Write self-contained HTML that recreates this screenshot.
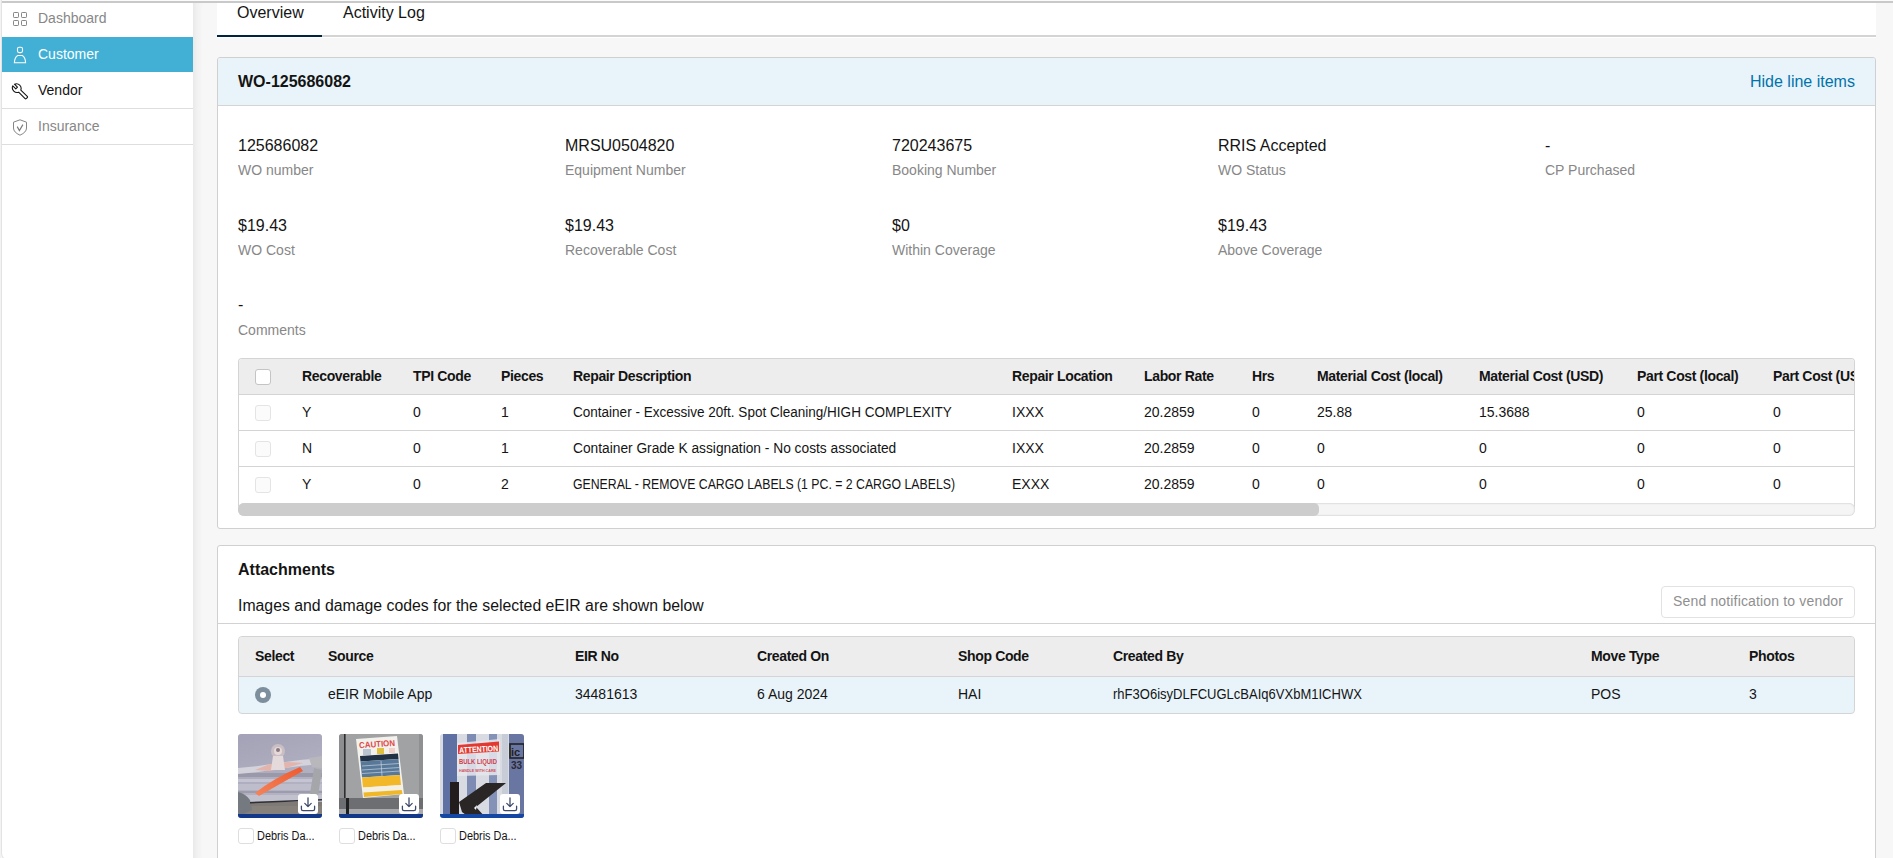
<!DOCTYPE html>
<html><head><meta charset="utf-8">
<style>
*{box-sizing:border-box;margin:0;padding:0}
html,body{width:1893px;height:858px;overflow:hidden}
body{background:#f7f7f7;font-family:"Liberation Sans",sans-serif;color:#141414;position:relative;font-size:14px}
.a{position:absolute;white-space:nowrap;line-height:1}
.t12{font-size:12px}
.t14{font-size:14px}
.t16{font-size:16px}
.b{font-weight:700}
.hb{letter-spacing:-0.25px}
.g{color:#878787}
.box{position:absolute}
.cb{position:absolute;width:16px;height:16px;border:1px solid #c4c4c4;border-radius:3px;background:#fff}
.cbd{border-color:#e4e4e4;background:#fbfbfb}
</style></head><body>
<div class="box" style="left:0;top:0;width:1px;height:858px;background:#f3f3f3"></div>
<div class="box" style="left:1px;top:0;width:192px;height:861px;background:#fff;border-left:1px solid #e3e3e3;border-bottom:1px solid #e3e3e3;border-radius:0 0 0 8px"></div>
<div class="box" style="left:193px;top:0;width:10px;height:858px;background:linear-gradient(to right,#e9e9e9,#f1f1f1 40%,#f7f7f7)"></div>
<div class="box" style="left:2px;top:1px;width:1891px;height:2px;background:#c9c9c9"></div>
<div class="box" style="left:2px;top:0;width:1891px;height:1px;background:#fbfbfb"></div>
<svg class="a" style="left:13px;top:12px" width="14" height="14" viewBox="0 0 14 14" fill="none" stroke="#878787" stroke-width="1">
<rect x="0.5" y="0.5" width="5" height="5" rx="0.7"/><rect x="8.5" y="0.5" width="5" height="5" rx="0.7"/>
<rect x="0.5" y="8.5" width="5" height="5" rx="0.7"/><rect x="8.5" y="8.5" width="5" height="5" rx="0.7"/></svg>
<span class="a t14" style="left:38px;top:11px;color:#878787">Dashboard</span>
<div class="box" style="left:2px;top:37px;width:191px;height:35px;background:#42b0d5"></div>
<svg class="a" style="left:13px;top:46px" width="14" height="18" viewBox="0 0 14 18" fill="none" stroke="#fff" stroke-width="1.1">
<rect x="4.5" y="1.2" width="5" height="5.4" rx="1.6"/><path d="M4.7 9.5 L9.3 9.5 Q12.4 11.3 12.6 16.8 L1.4 16.8 Q1.6 11.3 4.7 9.5 Z"/></svg>
<span class="a t14" style="left:38px;top:47px;color:#fff">Customer</span>
<svg class="a" style="left:11px;top:81.5px" width="18" height="18" viewBox="0 0 24 24" fill="none" stroke="#141414" stroke-width="1.45" stroke-linejoin="round">
<path d="M21.7 19.3 L13.1 10.7 C13.9 8.5 13.4 6 11.6 4.2 C9.7 2.3 6.9 1.9 4.6 2.9 L8.6 6.9 L6.4 9.1 L2.4 5.1 C1.3 7.4 1.8 10.2 3.7 12.1 C5.5 13.9 8 14.4 10.2 13.6 L18.8 22.2 C19.2 22.6 19.8 22.6 20.2 22.2 L21.7 20.7 C22.1 20.3 22.1 19.7 21.7 19.3 Z"/></svg>
<span class="a t14" style="left:38px;top:83px">Vendor</span>
<div class="box" style="left:2px;top:108px;width:191px;height:1px;background:#dedede"></div>
<svg class="a" style="left:12px;top:118.5px" width="16" height="17" viewBox="0 0 16 17" fill="none" stroke="#858585" stroke-width="1">
<path d="M8 0.8 L14.5 3.2 L14.5 9 Q14.5 13.3 8 16.2 Q1.5 13.3 1.5 9 L1.5 3.2 Z"/><path d="M5.2 7.6 L7.4 11.6 L10.9 5.6" stroke-width="1.15" stroke="#7a7a7a"/></svg>
<span class="a t14" style="left:38px;top:119px;color:#878787">Insurance</span>
<div class="box" style="left:2px;top:144px;width:191px;height:1px;background:#dedede"></div>
<div class="box" style="left:217px;top:3px;width:1659px;height:35px;background:#fff"></div>
<div class="box" style="left:322px;top:35px;width:1554px;height:2px;background:#d4d4d4"></div>
<div class="box" style="left:217px;top:35px;width:105px;height:2px;background:#00243d"></div>
<span class="a t16" style="left:237px;top:5px">Overview</span>
<span class="a t16" style="left:343px;top:5px">Activity Log</span>
<div class="box" style="left:217px;top:57px;width:1659px;height:472px;background:#fff;border:1px solid #d0d0d0;border-radius:3px"></div>
<div class="box" style="left:218px;top:58px;width:1657px;height:48px;background:#e9f4fa;border-bottom:1px solid #d4d4d4;border-radius:2px 2px 0 0"></div>
<span class="a t16 b" style="left:238px;top:74px">WO-125686082</span>
<span class="a t16" style="left:1750px;top:74px;color:#0073ab">Hide line items</span>
<span class="a t16" style="left:238px;top:138px">125686082</span>
<span class="a t14" style="left:238px;top:163px;color:#878787">WO number</span>
<span class="a t16" style="left:565px;top:138px">MRSU0504820</span>
<span class="a t14" style="left:565px;top:163px;color:#878787">Equipment Number</span>
<span class="a t16" style="left:892px;top:138px">720243675</span>
<span class="a t14" style="left:892px;top:163px;color:#878787">Booking Number</span>
<span class="a t16" style="left:1218px;top:138px">RRIS Accepted</span>
<span class="a t14" style="left:1218px;top:163px;color:#878787">WO Status</span>
<span class="a t16" style="left:1545px;top:138px">-</span>
<span class="a t14" style="left:1545px;top:163px;color:#878787">CP Purchased</span>
<span class="a t16" style="left:238px;top:218px">$19.43</span>
<span class="a t14" style="left:238px;top:243px;color:#878787">WO Cost</span>
<span class="a t16" style="left:565px;top:218px">$19.43</span>
<span class="a t14" style="left:565px;top:243px;color:#878787">Recoverable Cost</span>
<span class="a t16" style="left:892px;top:218px">$0</span>
<span class="a t14" style="left:892px;top:243px;color:#878787">Within Coverage</span>
<span class="a t16" style="left:1218px;top:218px">$19.43</span>
<span class="a t14" style="left:1218px;top:243px;color:#878787">Above Coverage</span>
<span class="a t16" style="left:238px;top:297px">-</span>
<span class="a t14" style="left:238px;top:323px;color:#878787">Comments</span>
<div class="box" style="left:238px;top:358px;width:1617px;height:152px;border:1px solid #d4d4d4;border-bottom:0;border-radius:4px 4px 0 0;overflow:hidden;background:#fff">
<div class="box" style="left:0;top:0;width:100%;height:36px;background:#ededed;border-bottom:1px solid #d4d4d4"></div>
<div class="box" style="left:0;top:36px;width:100%;height:36px;border-bottom:1px solid #d4d4d4"></div>
<div class="box" style="left:0;top:72px;width:100%;height:36px;border-bottom:1px solid #d4d4d4"></div>
</div>
<div class="box" style="left:238px;top:503px;width:1617px;height:13px;background:#f5f5f5;border-radius:6px;box-shadow:inset 0 0 1.5px 0.5px #cfcfcf"></div>
<div class="box" style="left:238px;top:503px;width:1081px;height:13px;background:#cdcdcd;border-radius:6px 5px 5px 6px"></div>
<div class="cb" style="left:255px;top:369px"></div>
<div class="cb cbd" style="left:255px;top:405px"></div>
<div class="cb cbd" style="left:255px;top:441px"></div>
<div class="cb cbd" style="left:255px;top:477px"></div>
<div class="box" style="left:239px;top:359px;width:1615px;height:35px;overflow:hidden">
<span class="a t14 b" style="left:63px;top:10px;letter-spacing:-0.35px">Recoverable</span>
<span class="a t14 b" style="left:174px;top:10px;letter-spacing:-0.35px">TPI Code</span>
<span class="a t14 b" style="left:262px;top:10px;letter-spacing:-0.35px">Pieces</span>
<span class="a t14 b" style="left:334px;top:10px;letter-spacing:-0.35px">Repair Description</span>
<span class="a t14 b" style="left:773px;top:10px;letter-spacing:-0.35px">Repair Location</span>
<span class="a t14 b" style="left:905px;top:10px;letter-spacing:-0.35px">Labor Rate</span>
<span class="a t14 b" style="left:1013px;top:10px;letter-spacing:-0.35px">Hrs</span>
<span class="a t14 b" style="left:1078px;top:10px;letter-spacing:-0.35px">Material Cost (local)</span>
<span class="a t14 b" style="left:1240px;top:10px;letter-spacing:-0.35px">Material Cost (USD)</span>
<span class="a t14 b" style="left:1398px;top:10px;letter-spacing:-0.35px">Part Cost (local)</span>
<span class="a t14 b" style="left:1534px;top:10px;letter-spacing:-0.35px">Part Cost (USD)</span>
</div>
<span class="a t14" style="left:302px;top:405px">Y</span>
<span class="a t14" style="left:413px;top:405px">0</span>
<span class="a t14" style="left:501px;top:405px">1</span>
<span class="a t14" style="left:573px;top:405px;transform:scaleX(0.966);transform-origin:0 0">Container - Excessive 20ft. Spot Cleaning/HIGH COMPLEXITY</span>
<span class="a t14" style="left:1012px;top:405px">IXXX</span>
<span class="a t14" style="left:1144px;top:405px">20.2859</span>
<span class="a t14" style="left:1252px;top:405px">0</span>
<span class="a t14" style="left:1317px;top:405px">25.88</span>
<span class="a t14" style="left:1479px;top:405px">15.3688</span>
<span class="a t14" style="left:1637px;top:405px">0</span>
<span class="a t14" style="left:1773px;top:405px">0</span>
<span class="a t14" style="left:302px;top:441px">N</span>
<span class="a t14" style="left:413px;top:441px">0</span>
<span class="a t14" style="left:501px;top:441px">1</span>
<span class="a t14" style="left:573px;top:441px;transform:scaleX(0.982);transform-origin:0 0">Container Grade K assignation - No costs associated</span>
<span class="a t14" style="left:1012px;top:441px">IXXX</span>
<span class="a t14" style="left:1144px;top:441px">20.2859</span>
<span class="a t14" style="left:1252px;top:441px">0</span>
<span class="a t14" style="left:1317px;top:441px">0</span>
<span class="a t14" style="left:1479px;top:441px">0</span>
<span class="a t14" style="left:1637px;top:441px">0</span>
<span class="a t14" style="left:1773px;top:441px">0</span>
<span class="a t14" style="left:302px;top:477px">Y</span>
<span class="a t14" style="left:413px;top:477px">0</span>
<span class="a t14" style="left:501px;top:477px">2</span>
<span class="a t14" style="left:573px;top:477px;transform:scaleX(0.877);transform-origin:0 0">GENERAL - REMOVE CARGO LABELS (1 PC. = 2 CARGO LABELS)</span>
<span class="a t14" style="left:1012px;top:477px">EXXX</span>
<span class="a t14" style="left:1144px;top:477px">20.2859</span>
<span class="a t14" style="left:1252px;top:477px">0</span>
<span class="a t14" style="left:1317px;top:477px">0</span>
<span class="a t14" style="left:1479px;top:477px">0</span>
<span class="a t14" style="left:1637px;top:477px">0</span>
<span class="a t14" style="left:1773px;top:477px">0</span>
<div class="box" style="left:217px;top:545px;width:1659px;height:330px;background:#fff;border:1px solid #d0d0d0;border-radius:3px"></div>
<span class="a t16 b" style="left:238px;top:562px">Attachments</span>
<span class="a t16" style="left:238px;top:598px;transform:scaleX(0.988);transform-origin:0 0">Images and damage codes for the selected eEIR are shown below</span>
<div class="box" style="left:1661px;top:586px;width:194px;height:32px;border:1px solid #e2e2e2;border-radius:4px;background:#fff"></div>
<span class="a t14" style="left:1673px;top:594px;color:#8f8f8f;letter-spacing:0.16px">Send notification to vendor</span>
<div class="box" style="left:218px;top:623px;width:1657px;height:1px;background:#d2d2d2"></div>
<div class="box" style="left:238px;top:636px;width:1617px;height:78px;border:1px solid #d4d4d4;border-radius:4px;overflow:hidden;background:#e9f4fa">
<div class="box" style="left:0;top:0;width:100%;height:40px;background:#ededed;border-bottom:1px solid #d4d4d4"></div>
</div>
<span class="a t14 b" style="left:255px;top:649px;letter-spacing:-0.35px">Select</span>
<span class="a t14 b" style="left:328px;top:649px;letter-spacing:-0.35px">Source</span>
<span class="a t14 b" style="left:575px;top:649px;letter-spacing:-0.35px">EIR No</span>
<span class="a t14 b" style="left:757px;top:649px;letter-spacing:-0.35px">Created On</span>
<span class="a t14 b" style="left:958px;top:649px;letter-spacing:-0.35px">Shop Code</span>
<span class="a t14 b" style="left:1113px;top:649px;letter-spacing:-0.35px">Created By</span>
<span class="a t14 b" style="left:1591px;top:649px;letter-spacing:-0.35px">Move Type</span>
<span class="a t14 b" style="left:1749px;top:649px;letter-spacing:-0.35px">Photos</span>
<span class="a t14" style="left:328px;top:687px">eEIR Mobile App</span>
<span class="a t14" style="left:575px;top:687px">34481613</span>
<span class="a t14" style="left:757px;top:687px">6 Aug 2024</span>
<span class="a t14" style="left:958px;top:687px">HAI</span>
<span class="a t14" style="left:1113px;top:687px;transform:scaleX(0.93);transform-origin:0 0">rhF3O6isyDLFCUGLcBAIq6VXbM1ICHWX</span>
<span class="a t14" style="left:1591px;top:687px">POS</span>
<span class="a t14" style="left:1749px;top:687px">3</span>
<div class="box" style="left:255px;top:687px;width:16px;height:16px;border-radius:50%;background:#7d8e9c"></div>
<div class="box" style="left:260px;top:692px;width:6px;height:6px;border-radius:50%;background:#fff"></div>
<div class="box" style="left:238px;top:734px;width:84px;height:84px;border-radius:3px;overflow:hidden"><svg width="84" height="84" viewBox="0 0 84 84">
<defs><linearGradient id="g1" x1="0" y1="0" x2="0.3" y2="1"><stop offset="0" stop-color="#a3a2b6"/><stop offset="0.5" stop-color="#aeadbf"/><stop offset="1" stop-color="#b6b6c4"/></linearGradient>
<linearGradient id="or" x1="0" y1="1" x2="1" y2="0"><stop offset="0" stop-color="#f4845a"/><stop offset="1" stop-color="#ee5a30"/></linearGradient></defs>
<rect width="84" height="84" fill="url(#g1)"/>
<rect x="0" y="39" width="84" height="4" fill="#9a99aa"/>
<rect x="0" y="45" width="84" height="3" fill="#c4c4d2"/>
<rect x="0" y="50" width="84" height="6" fill="#bdbdcb"/>
<rect x="0" y="57" width="84" height="2" fill="#9c9cac"/>
<rect x="0" y="61" width="84" height="6" fill="#c2c2ce"/>
<rect x="0" y="68" width="84" height="12" fill="#7f7a76"/>
<rect x="0" y="72" width="84" height="8" fill="#8a847e" opacity="0.7"/>
<path d="M0 34 L20 32 L40 29 L62 26 L84 24 L84 30 L62 32 L40 35 L20 38 L0 40 Z" fill="#d4d2da"/>
<path d="M17 36 L32 30 L50 28 L65 29 L48 34 L32 37 Z" fill="#e2b4ac"/>
<circle cx="40" cy="17" r="7" fill="#c9bec4"/>
<circle cx="40" cy="17" r="4" fill="#e8d8d8"/>
<circle cx="40" cy="16" r="2" fill="#857a82"/>
<path d="M35 22 L45 22 L47 36 L33 36 Z" fill="#e4dadc"/>
<path d="M17 59 Q36 44 62 33 L65 37 Q40 51 21 62 Z" fill="url(#or)"/>
<path d="M71 24 L84 22 L84 34 L74 33 Z" fill="#b8b8bc"/>
<path d="M76 34 L84 36 L80 62 L72 60 Z" fill="#a4a6aa"/>
<path d="M0 58 Q8 60 12 66 L14 76 L6 80 L0 80 Z" fill="#747a80"/>
<path d="M12 68 L84 65 L84 66.5 L12 69.5 Z" fill="#2e3034"/>
<rect x="0" y="80" width="84" height="4" fill="#12388a"/>
</svg><div class="box" style="left:60px;top:60px;width:20px;height:20px;background:#fff;border-radius:3px"><svg width="20" height="20" viewBox="0 0 20 20" fill="none" stroke="#3e4a6a" stroke-width="1.3" stroke-linecap="round" stroke-linejoin="round"><path d="M10 3.8 V12.6 M6.8 9.4 L10 12.6 L13.2 9.4"/><path d="M3.4 12.2 V15 Q3.4 16.6 5 16.6 H15 Q16.6 16.6 16.6 15 V12.2"/></svg></div></div>
<div class="box" style="left:238px;top:828px;width:16px;height:16px;border:1px solid #dedede;border-radius:3px;background:#fff"></div>
<span class="a t12" style="left:257px;top:830px;transform:scaleX(0.91);transform-origin:0 0">Debris Da...</span>
<div class="box" style="left:339px;top:734px;width:84px;height:84px;border-radius:3px;overflow:hidden"><svg width="84" height="84" viewBox="0 0 84 84">
<rect width="84" height="84" fill="#a0a2a4"/>
<rect x="0" y="0" width="5" height="84" fill="#8c8e90"/>
<rect x="5" y="0" width="1.6" height="84" fill="#2c2e30"/>
<rect x="80" y="0" width="4" height="84" fill="#8e9092"/>
<rect x="0" y="64" width="84" height="11" fill="#6c6e71"/>
<rect x="0" y="75" width="84" height="5" fill="#a8aaac"/>
<rect x="7" y="64" width="3" height="20" fill="#1e2022"/>
<path d="M17 5 L58 2 L65 60 L24 64 Z" fill="#f3f1ec"/>
<text x="20" y="13" font-family="Liberation Sans" font-weight="700" font-size="8.5" fill="#e04848" transform="rotate(-4 38 10)" textLength="36" lengthAdjust="spacingAndGlyphs">CAUTION</text>
<rect x="24" y="15" width="8" height="6" fill="#b8c4d0"/><rect x="38" y="14" width="7" height="6" fill="#e0c040"/><rect x="50" y="14" width="6" height="5" fill="#f0d0c8"/>
<path d="M21 22 L59 19.5 L59.5 25 L21.5 27.5 Z" fill="#203244"/>
<path d="M21.5 27.5 L59.5 25 L61 41 L23 43.5 Z" fill="#58789a"/>
<path d="M23 32 L60 29.5 M23 36 L60.5 33.5 M23 39.5 L61 37 M42 27 L43 42" stroke="#d8e0e8" stroke-width="0.6"/>
<path d="M23 43.5 L61 41 L62 51 L24 53.5 Z" fill="#f2b82a"/>
<path d="M24 53.5 L62 51 L62.7 56 L24.5 58.5 Z" fill="#f4f0e4"/>
<path d="M24.5 58.5 L62.7 56 L63.5 60 L25 63 Z" fill="#f0b828"/>
<rect x="0" y="80" width="84" height="4" fill="#12388a"/>
</svg><div class="box" style="left:60px;top:60px;width:20px;height:20px;background:#fff;border-radius:3px"><svg width="20" height="20" viewBox="0 0 20 20" fill="none" stroke="#3e4a6a" stroke-width="1.3" stroke-linecap="round" stroke-linejoin="round"><path d="M10 3.8 V12.6 M6.8 9.4 L10 12.6 L13.2 9.4"/><path d="M3.4 12.2 V15 Q3.4 16.6 5 16.6 H15 Q16.6 16.6 16.6 15 V12.2"/></svg></div></div>
<div class="box" style="left:339px;top:828px;width:16px;height:16px;border:1px solid #dedede;border-radius:3px;background:#fff"></div>
<span class="a t12" style="left:358px;top:830px;transform:scaleX(0.91);transform-origin:0 0">Debris Da...</span>
<div class="box" style="left:440px;top:734px;width:84px;height:84px;border-radius:3px;overflow:hidden"><svg width="84" height="84" viewBox="0 0 84 84">
<rect width="84" height="84" fill="#d8dce2"/>
<rect x="3" y="0" width="14" height="84" fill="#5f70a2"/>
<rect x="27" y="0" width="9" height="84" fill="#7e8cb4"/>
<rect x="49" y="0" width="8" height="84" fill="#8592b8"/>
<rect x="62" y="0" width="6" height="84" fill="#c8ccd6"/>
<rect x="69" y="0" width="15" height="84" fill="#6a76a2"/>
<path d="M17 9 L60 5 L60 41 L17 42 Z" fill="#e6e6ec" opacity="0.85"/>
<path d="M18 11 L59 7.5 L59 17.5 L18 20 Z" fill="#e23a30"/>
<text x="19" y="18" font-family="Liberation Sans" font-weight="700" font-size="8" fill="#fff" textLength="39" lengthAdjust="spacingAndGlyphs" transform="rotate(-3 38 14)">ATTENTION</text>
<text x="19" y="30" font-family="Liberation Sans" font-weight="700" font-size="8" fill="#d0404c" textLength="38" lengthAdjust="spacingAndGlyphs">BULK LIQUID</text>
<text x="19" y="38" font-family="Liberation Sans" font-weight="700" font-size="4" fill="#d0505c" textLength="37" lengthAdjust="spacingAndGlyphs">HANDLE WITH CARE</text>
<rect x="10" y="48" width="9" height="36" fill="#221c1c"/>
<path d="M19 68 L46 49 L66 49 L36 73 L46 84 L30 84 L22 78 Z" fill="#2a2626"/>
<path d="M34 74 L37 71 L36 76 Z" fill="#f4f4f4"/>
<rect x="70" y="10" width="14" height="14" fill="none" stroke="#222" stroke-width="1.6"/>
<text x="71" y="22" font-family="Liberation Sans" font-weight="700" font-size="11" fill="#222">ic</text>
<text x="71" y="35" font-family="Liberation Sans" font-weight="700" font-size="10" fill="#2a2a32">33</text>
<rect x="0" y="80" width="84" height="4" fill="#1446a4"/>
</svg><div class="box" style="left:60px;top:60px;width:20px;height:20px;background:#fff;border-radius:3px"><svg width="20" height="20" viewBox="0 0 20 20" fill="none" stroke="#3e4a6a" stroke-width="1.3" stroke-linecap="round" stroke-linejoin="round"><path d="M10 3.8 V12.6 M6.8 9.4 L10 12.6 L13.2 9.4"/><path d="M3.4 12.2 V15 Q3.4 16.6 5 16.6 H15 Q16.6 16.6 16.6 15 V12.2"/></svg></div></div>
<div class="box" style="left:440px;top:828px;width:16px;height:16px;border:1px solid #dedede;border-radius:3px;background:#fff"></div>
<span class="a t12" style="left:459px;top:830px;transform:scaleX(0.91);transform-origin:0 0">Debris Da...</span>
</body></html>
